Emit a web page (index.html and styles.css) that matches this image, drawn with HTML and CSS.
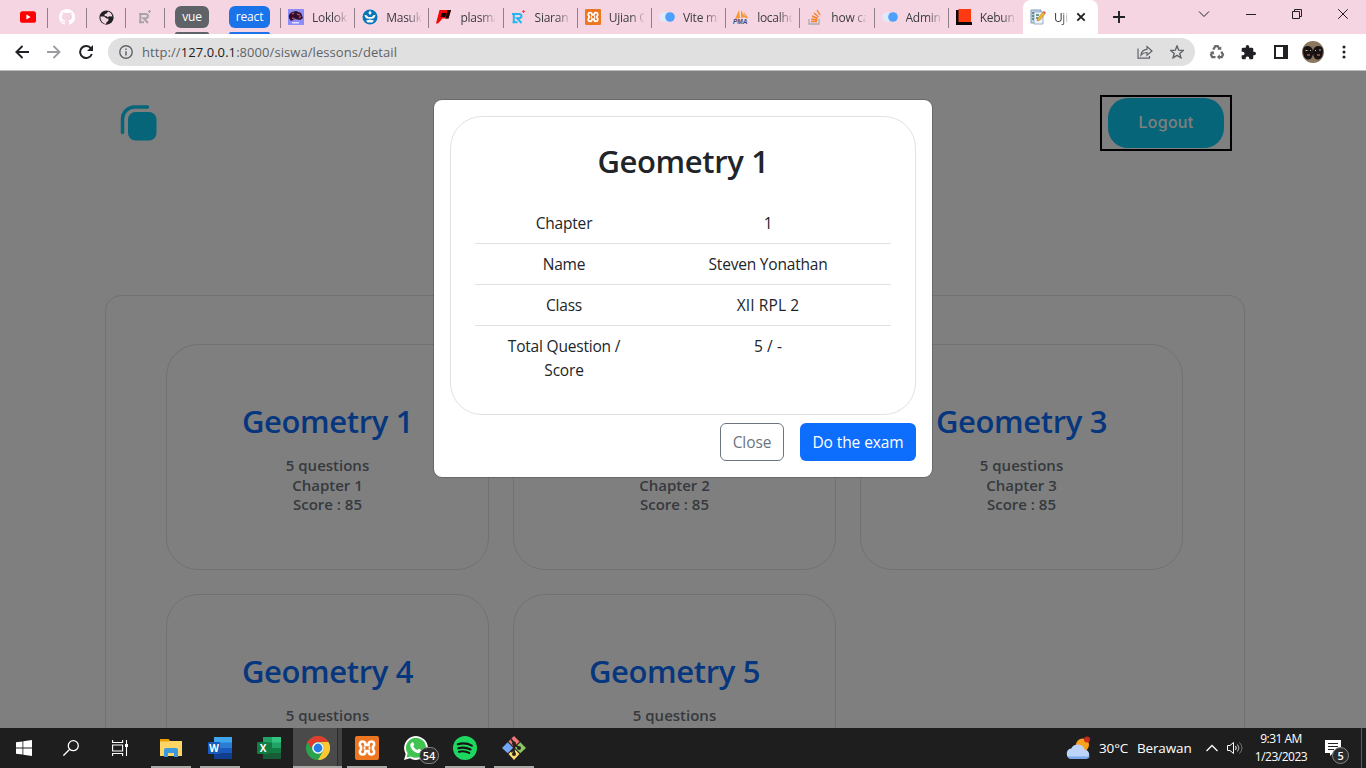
FILE: index.html
```html
<!DOCTYPE html>
<html lang="en">
<head>
<meta charset="utf-8">
<title>Ujian Online</title>
<link rel="stylesheet" href="styles.css">
</head>
<body>
<div class="screen">
  <header class="tabstrip">
    <div class="pin"><svg width="16" height="16" viewBox="0 0 16 16"><rect y="2.2" width="16" height="11.6" rx="2.6" fill="#f00"/><path d="M6.4 5.6v4.8L10.6 8z" fill="#fff"/></svg></div>
    <div class="pin"><svg width="16" height="16" viewBox="0 0 16 16"><path fill="#fff" d="M8 0C3.58 0 0 3.58 0 8c0 3.54 2.29 6.53 5.47 7.59.4.07.55-.17.55-.38v-1.49c-2.23.48-2.7-.95-2.7-.95-.36-.92-.89-1.17-.89-1.17-.72-.49.06-.48.06-.48.8.06 1.23.82 1.23.82.71 1.22 1.87.87 2.33.66.07-.52.28-.87.5-1.07-1.77-.2-3.64-.89-3.64-3.95 0-.87.31-1.59.82-2.15-.08-.2-.36-1.02.08-2.12 0 0 .67-.21 2.2.82a7.6 7.6 0 0 1 4 0c1.53-1.04 2.2-.82 2.2-.82.44 1.1.16 1.92.08 2.12.51.56.82 1.27.82 2.15 0 3.07-1.87 3.75-3.65 3.95.29.25.54.73.54 1.48v2.2c0 .21.15.46.55.38A8 8 0 0 0 16 8c0-4.42-3.58-8-8-8z"/></svg></div>
    <div class="pin"><svg width="15" height="15" viewBox="0 0 16 16"><circle cx="8" cy="8" r="7.6" fill="#202124"/><path d="M1.500 7h4l2.500 2h2v2.500L8 13l-.5 2C4 14.500 1.500 11.500 1.500 7zM9.500 1.600l-1 1.900-2.500 1v2l2 .2 1.500 1 1.500-1 3.300.300C14 4.500 12.500 2.500 9.500 1.600z" fill="#f6d5e3"/></svg></div>
    <div class="pin"><svg width="16" height="16" viewBox="0 0 16 16" fill="none" stroke="#a8a3a8" stroke-width="2"><path d="M2 5h6.500Q11 5 11 7T8.500 9.200H6.500L11 14M3.300 5v8.500M2 13.300h5"/><path stroke-width="1.200" d="M12.500 1v3M11 2.500h3"/></svg></div>
    <div class="group"><span class="chip chip-grey">vue</span></div>
    <div class="group group-blue"><span class="chip chip-blue">react</span></div>
    <div class="tab"><svg width="16" height="16" viewBox="0 0 16 16"><path fill="#8d8df5" d="M0 0h16v16H0z"/><path d="M1 9Q0 5 4 3l4-1 5 2 2 5-3 2-5-1-4 2z" fill="#300f2c"/><path d="M4 5l2-1M9 5l3 1M4 9l3 1M11 9l2-2" stroke="#a54b72" stroke-width="1.500"/><path fill="#dedcff" d="M4 13h7v1.500H4z"/></svg><span>Loklok</span></div>
    <div class="tab"><svg width="16" height="16" viewBox="0 0 16 16"><circle cx="8" cy="8" r="7.500" fill="#0875b8"/><path d="M8 1.500l1.700 2.500L8 6 6.300 4zM2.500 6c2 0 3 .5 3.500 2h4c.5-1.500 1.500-2 3.500-2-.5 2.500-1.500 3.500-3.500 3.700H6C4 9.500 3 8.500 2.500 6zM4 11.500l4-1 4 1-1.500 2H5.500z" fill="#f6f8f3"/></svg><span>Masuk</span></div>
    <div class="tab"><svg width="16" height="16" viewBox="0 0 16 16"><path d="M3.500 1H15l-2.500 8.500H6.500l-4.500 5H0z" fill="#f20808"/><path d="M6 4h4.500L9 8H4.500z" fill="#190000"/><path d="M11.500 1H15l-2.500 8.500H9.500z" fill="#190000"/></svg><span>plasma</span></div>
    <div class="tab"><svg width="16" height="16" viewBox="0 0 16 16" fill="none" stroke="#25b5ef" stroke-width="2"><path d="M1 5h7Q10.500 5 10.500 7T8 9.200H6L10.500 14M2.800 5v8.500M1.500 13.300h5"/><path stroke="#ed4b5b" stroke-width="1.200" d="M12.500 1v3M11 2.500h3"/></svg><span>Siaran</span></div>
    <div class="tab"><svg width="16" height="16" viewBox="0 0 24 24"><use href="#xampp"/></svg><span>Ujian Online</span></div>
    <div class="tab"><svg width="16" height="16" viewBox="0 0 16 16"><use href="#toggle"/></svg><span>Vite min</span></div>
    <div class="tab"><svg width="16" height="16" viewBox="0 0 16 16"><path d="M6 1l-4 9 5-1zM8 1v8l4-1zM11 3l1 6 3 0z" fill="#f69a32"/><text x="0" y="15" class="pma">PMA</text></svg><span>localhost</span></div>
    <div class="tab"><svg width="16" height="16" viewBox="0 0 16 16" fill="none"><path d="M2 10v5h10v-5" stroke="#aaa" stroke-width="1.300"/><path d="M4 12.500h6M4.200 10l6 1M5 7l5.500 2.500M7 4l4.500 4M10 1l3 5" stroke="#f48024" stroke-width="1.400"/></svg><span>how can</span></div>
    <div class="tab"><svg width="16" height="16" viewBox="0 0 16 16"><g id="toggle"><circle cx="5" cy="8" r="4.800" fill="#dfeafa"/><circle cx="11" cy="8" r="4.800" fill="#4da0fb"/></g></svg><span>Admin</span></div>
    <div class="tab last-tab"><svg width="16" height="16" viewBox="0 0 16 16"><path d="M0 1h3v12h13v3H0z" fill="#080808"/><path d="M2.500 0H15v13H2.500z" fill="#ff3a11"/></svg><span>Kebun</span></div>
    <div class="tab tab-active"><svg width="16" height="16" viewBox="0 0 16 16"><path d="M1 1h10v13H1z" fill="#c6d7ec" stroke="#819bbd"/><path d="M4 3h9v12H4z" fill="#edf4fb" stroke="#9aaeca"/><path d="M2 4h2M2 7h2M2 10h2M6 6h3M6 9h2" stroke="#427a68" stroke-width="1.600"/><path d="M7 12l1-3 5-6 2 2-5 6z" fill="#f4b52b" stroke="#937129" stroke-width=".5"/><path d="M13 3l1-1 2 2-1 1z" fill="#e25445"/></svg><span>Ujian</span><svg class="close" width="10" height="10" viewBox="0 0 10 10"><path d="M1.300 1.300l7.400 7.400m0-7.400L1.300 8.700" stroke="#202124" stroke-width="1.900"/></svg></div>
    <svg class="newtab" width="12" height="12" viewBox="0 0 12 12"><path d="M6 0v12M0 6h12" stroke="#202124" stroke-width="1.900"/></svg>
    <div class="winctl">
      <svg width="12" height="12" viewBox="0 0 12 12"><path d="M1 3.500l5 5 5-5"/></svg>
      <svg width="10" height="12" viewBox="0 0 10 12"><path d="M0 6.500h10"/></svg>
      <svg width="10" height="12" viewBox="0 0 10 12"><path d="M.5 3.500h7v7h-7zM2.500 3V1.500h7v7H8"/></svg>
      <svg width="10" height="12" viewBox="0 0 10 12"><path d="M.2 1.200l9.600 9.600m0-9.600L.2 10.800"/></svg>
    </div>
  </header>

  <nav class="toolbar">
    <svg width="14" height="14" viewBox="0 0 14 14"><path d="M14 7H2M7.500 1L1.400 7l6.100 6" fill="none" stroke="#202124" stroke-width="1.900"/></svg>
    <svg width="14" height="14" viewBox="0 0 14 14"><path d="M0 7h12M6.500 1l6.100 6-6.100 6" fill="none" stroke="#9c9da0" stroke-width="1.800"/></svg>
    <svg width="14" height="14" viewBox="0 0 14 14"><path d="M12 3.500A6 6 0 1 0 12.800 9" fill="none" stroke="#202124" stroke-width="2"/><path d="M14 0v6H8z" fill="#202124"/></svg>
    <div class="omnibox">
      <svg width="14" height="14" viewBox="0 0 14 14"><circle cx="7" cy="7" r="6.200" fill="none" stroke="#5f6368" stroke-width="1.400"/><path d="M7 6.200v4.300M7 3.400V5" stroke="#5f6368" stroke-width="1.500"/></svg>
      <span class="url">http://<b>127.0.0.1</b>:8000/siswa/lessons/detail</span>
      <svg class="share" width="16" height="14" viewBox="0 0 16 14" fill="none" stroke="#5f6368" stroke-width="1.200"><path d="M1 3.500v9.700h11.500V11M4 10c.5-3.500 2.500-5.500 6-5.700V1.500L15 6l-5 4.300V7.500c-2.500 0-4.500.7-6 2.500z"/></svg>
      <svg width="14" height="14" viewBox="0 0 14 14"><path d="M7 1l1.700 4.200 4.600.3-3.500 2.900 1.100 4.400L7 10.400l-3.900 2.400 1.100-4.400L.7 5.500l4.600-.3z" fill="none" stroke="#5f6368" stroke-width="1.400"/></svg>
    </div>
    <div class="actions">
      <svg width="16" height="16" viewBox="0 0 16 16" fill="none" stroke="#66686b" stroke-width="2.200"><path d="M4.300 5.600L6.300 2.200h2.400l1.700 2.600"/><path d="M12.300 7.600l1.700 3-1.200 2.500h-2.600M6.500 13.100H3.200L2 10.800l1.400-2.500"/><path d="M8.300 5.700h4V2.300zM10.800 10.200v5.600L7.900 13zM.8 8.300l3.600-1.300 1 3.700z" fill="#66686b" stroke="none"/></svg>
      <svg width="15" height="15" viewBox="1 1 22 22"><path fill="#202124" d="M20.500 11H19V7a2 2 0 0 0-2-2h-4V3.500a2.500 2.500 0 0 0-5 0V5H4a2 2 0 0 0-2 2v3.800h1.500a2.700 2.700 0 0 1 0 5.400H2V20a2 2 0 0 0 2 2h3.800v-1.500a2.700 2.700 0 0 1 5.400 0V22H17a2 2 0 0 0 2-2v-4h1.500a2.500 2.500 0 0 0 0-5z"/></svg>
      <svg class="panel-icon" width="14" height="14" viewBox="0 0 14 14"><path d="M1 1h12v12H1z" fill="#fff" stroke="#202124" stroke-width="2"/><path d="M9 1h4v12H9z" fill="#202124"/></svg>
      <svg class="avatar" width="22" height="22" viewBox="0 0 22 22"><circle cx="11" cy="11" r="11" fill="#8d7660"/><path d="M1 10q0-5 4.500-5T11 10q1-5 5.500-5T21 10q0 7-4.500 8.500Q12 19 11 13q-1 6-5.500 5.500Q1 17 1 10z" fill="#171314"/><path d="M3.500 9.500h2M8 10l1-1M14 9.500h-1M17 9h2" stroke="#c9b3a7"/><path d="M5 14h3M15 14h3" stroke="#bb5148" stroke-width="1.600"/></svg>
      <svg width="4" height="14" viewBox="0 0 4 14" fill="#202124"><circle cx="2" cy="2" r="1.500"/><circle cx="2" cy="7" r="1.500"/><circle cx="2" cy="12" r="1.500"/></svg>
    </div>
  </nav>

  <main class="page">
    <div class="topbar">
      <svg width="38" height="38" viewBox="0 0 38 38"><path d="M2.500 28.500V15A12 12 0 0 1 14.500 3h13" fill="none" stroke="#0ccaf0" stroke-width="3.500" stroke-linecap="round"/><rect x="8" y="8" width="28.500" height="28.500" rx="7.500" fill="#0ccaf0"/></svg>
      <div class="logout-focus"><button class="logout">Logout</button></div>
    </div>
    <section class="panel">
      <article class="card"><h2>Geometry 1</h2><p>5 questions<br>Chapter 1<br>Score : 85</p></article>
      <article class="card"><h2>Geometry 2</h2><p>5 questions<br>Chapter 2<br>Score : 85</p></article>
      <article class="card"><h2>Geometry 3</h2><p>5 questions<br>Chapter 3<br>Score : 85</p></article>
      <article class="card"><h2>Geometry 4</h2><p>5 questions<br>Chapter 4<br>Score : 85</p></article>
      <article class="card"><h2>Geometry 5</h2><p>5 questions<br>Chapter 5<br>Score : 85</p></article>
    </section>
    <div class="backdrop">
      <div class="modal">
        <div class="summary">
          <h2>Geometry 1</h2>
          <div class="row"><span>Chapter</span><span>1</span></div>
          <div class="row"><span>Name</span><span>Steven Yonathan</span></div>
          <div class="row"><span>Class</span><span class="class-name">XII RPL 2</span></div>
          <div class="row"><span>Total Question /<br>Score</span><span class="class-name">5 / -</span></div>
        </div>
        <div class="buttons"><button class="btn btn-close">Close</button><button class="btn btn-exam">Do the exam</button></div>
      </div>
    </div>
  </main>

  <footer class="taskbar">
    <div class="app"><svg width="16" height="16" viewBox="0 0 16 16" fill="#fff"><path d="M0 2.300l6.500-.9v6.200H0zM7.300 1.300L16 0v7.600H7.300zM0 8.400h6.500v6.200L0 13.700zM7.300 8.400H16V16l-8.700-1.300z"/></svg></div>
    <div class="app"><svg width="16" height="16" viewBox="0 0 16 16" fill="none" stroke="#fff" stroke-width="1.300"><circle cx="10.300" cy="5.700" r="5"/><path d="M6.700 9.300L.4 15.600"/></svg></div>
    <div class="app"><svg width="16" height="16" viewBox="0 0 16 16" fill="none" stroke="#fff" stroke-width="1.100"><path d="M.6 0v2.500h10V0M.6 5h10v6H.6zM.6 16v-2.500h10V16M14.500 0v16"/><path d="M13 4h3v3h-3z" fill="#fff" stroke="none"/></svg></div>
    <div class="app open"><svg width="22" height="20" viewBox="0 0 22 20"><path d="M0 1h8l2 2h12v15H0z" fill="#ffd666"/><path d="M0 1h9v2.500H0z" fill="#e7a000"/><path d="M4 19v-7q0-2 2-2h10q2 0 2 2v7h-4v-4H8v4z" fill="#3b99df"/></svg></div>
    <div class="app open"><svg width="24" height="22" viewBox="0 0 24 22"><path fill="#41a5ee" d="M6 0h18v6H6z"/><path fill="#2b7cd3" d="M6 5.500h18V11H6z"/><path fill="#185abd" d="M6 11h18v5.500H6z"/><path fill="#103f91" d="M6 16.500h18V22H6z"/><rect y="5" width="12" height="12" rx="1" fill="#185abd"/><text x="6" y="14.500" class="office">W</text></svg></div>
    <div class="app"><svg width="24" height="22" viewBox="0 0 24 22"><path fill="#21a366" d="M6 0h9v6H6z"/><path fill="#33c481" d="M15 0h9v6h-9z"/><path fill="#107c41" d="M6 5.500h9V16H6z"/><path fill="#21a366" d="M15 5.500h9V11h-9z"/><path fill="#107c41" d="M15 11h9v5.500h-9z"/><path fill="#185c37" d="M6 16h18v6H6z"/><rect y="5" width="12" height="12" rx="1" fill="#107c41"/><text x="6" y="14.500" class="office">X</text></svg></div>
    <div class="app open focused"><svg width="24" height="24" viewBox="0 0 24 24"><circle cx="12" cy="12" r="12" fill="#2ba24c"/><path d="M1.600 6A12 12 0 0 1 22.400 6H12a6 6 0 0 0-5.200 9z" fill="#e33b2e"/><path d="M22.400 6A12 12 0 0 1 12 24l5.200-9A6 6 0 0 0 12 6z" fill="#fcc934"/><circle cx="12" cy="12" r="5.800" fill="#fff"/><circle cx="12" cy="12" r="4.400" fill="#277de8"/></svg></div>
    <div class="app open"><svg width="24" height="24" viewBox="0 0 24 24"><g id="xampp"><rect width="24" height="24" rx="2" fill="#ed7621"/><path d="M7.500 5.500C4.500 5.500 4 9 6 10.500v3C4 15 4.500 18.500 7.500 18.500c2.500 0 3-1.500 3-3.500h3c0 2 .5 3.500 3 3.500 3 0 3.500-3.500 1.500-5v-3c2-1.500 1.500-5-1.500-5-2.500 0-3 1.500-3 3.500h-3c0-2-.5-3.500-3-3.500z" fill="none" stroke="#fff" stroke-width="2.600"/><path d="M9.500 10.500v3M14.500 10.500v3" stroke="#fff" stroke-width="1.800"/></g></svg></div>
    <div class="app badge-host"><svg width="24" height="24" viewBox="0 0 24 24"><path d="M0 24l1.700-6A11.900 11.900 0 1 1 6 22.300z" fill="#fff"/><path d="M2.500 21.500l1.100-4.200A10 10 0 1 1 7 20.500z" fill="#40c351"/><path d="M8 6.500c.8-.5 1.300-.3 1.700.7l.6 1.500-1 1.500c1 2 2.300 3 4.200 3.800l1.200-1.300 2.600 1.200c.2 2.500-2 3.500-3.800 3C9.500 16 6 12 6.300 9c.1-1 .8-2 1.700-2.500z" fill="#fff"/></svg><span class="badge wide">54</span></div>
    <div class="app open"><svg width="24" height="24" viewBox="0 0 24 24"><circle cx="12" cy="12" r="12" fill="#1ed760"/><path d="M4.800 8.300c5-1.400 10-.9 14 1.300M5.300 12.200c4.500-1.200 8.500-.7 12.200 1.200M6 15.700c3.800-.9 7-.5 10.200 1.200" fill="none" stroke="#191414" stroke-width="2.200" stroke-linecap="round"/></svg></div>
    <div class="app open"><svg width="24" height="24" viewBox="0 0 24 24"><path d="M12 0l5.500 5.500L12 11 6.500 5.500z" fill="#f37778"/><path d="M5.700 6.300l5.500 5.500-5.500 5.500L0 12z" fill="#72a8f3"/><path d="M18.300 6.300L24 12l-5.700 5.300-5.500-5.500z" fill="#8ac763"/><path d="M12 12.500l5.500 5.500L12 24l-5.500-6z" fill="#fadb72"/><path d="M9 3l3 4v11M12 8l5 4M12 13l-3 3" fill="none" stroke="#29211f" stroke-width="1.800"/><circle cx="12" cy="7.500" r="2" fill="#29211f"/><circle cx="17" cy="12" r="2" fill="#29211f"/><circle cx="12" cy="18" r="2" fill="#29211f"/></svg></div>
    <div class="tray">
      <svg class="weather" width="25" height="24" viewBox="0 0 25 24"><circle cx="16.500" cy="9" r="6.500" fill="#f7a11c"/><path d="M5.500 23a5.300 5.300 0 0 1-.3-10.500 7.300 7.300 0 0 1 13.500 1.200A4.800 4.800 0 0 1 20 23z" fill="#bcd3fa"/><path d="M1.500 20.500A5 5 0 0 0 5.500 23H20a4.700 4.700 0 0 0 4-2.500z" fill="#7da8ee"/><circle cx="21" cy="3.500" r="3" fill="#c92b20"/></svg>
      <span class="temp">30°C</span><span class="sky">Berawan</span>
      <svg class="chev" width="12" height="8" viewBox="0 0 12 8"><path d="M.5 7L6 1.500 11.500 7" fill="none" stroke="#fff" stroke-width="1.300"/></svg>
      <svg class="vol" width="17" height="14" viewBox="0 0 17 14" fill="none" stroke="#fff"><path d="M.5 4.500H3l3.500-3v11L3 9.500H.5zM8.500 5q1.500 2 0 4"/><path d="M10.500 3.500q3 3.500 0 7" stroke="#bbb"/><path d="M12.500 1.500q5 5.500 0 11" stroke="#777"/></svg>
      <div class="clock">9:31 AM<br>1/23/2023</div>
      <div class="badge-host note"><svg width="16" height="16" viewBox="0 0 16 16"><path d="M0 0h16v13H8l-3 3v-3H0z" fill="#fff"/><path d="M3 3.500h10M3 6.500h10M3 9.500h6" stroke="#222"/></svg><span class="badge">5</span></div>
    </div>
    <div class="peek"></div>
  </footer>
</div>
</body>
</html>
```
FILE: styles.css
```css
* { box-sizing: border-box; }
body { margin: 0; font-family: "Open Sans", "Noto Sans", sans-serif; }
h2, p { margin: 0; }
svg { display: block; flex: none; }
button { font: inherit; padding: 0; }

.screen { width: 1366px; height: 768px; display: flex; flex-direction: column; overflow: hidden; }

/* Tab strip */
.tabstrip { height: 34px; flex: none; display: flex; background: #f6d5e3; padding-left: 9px; font-size: 12px; color: #3c3c40; }
.pin { width: 39px; height: 34px; flex: none; display: flex; align-items: center; justify-content: center; }
.pin svg { margin-right: 1px; }
.pin, .tab { background: linear-gradient(#8f8087, #8f8087) right 0 top 8px / 1px 20px no-repeat; }
.group { width: 54px; flex: none; padding: 6px 10px 0 10px; height: 34px; display: flex; flex-direction: column; justify-content: space-between; }
.group::after { content: ""; height: 2px; background: #5f6368; border-radius: 2px 2px 0 0; }
.group-blue { width: 62px; padding: 6px 11px 0 10px; background: linear-gradient(#8f8087, #8f8087) right 0 top 8px / 1px 20px no-repeat; }
.group-blue::after { background: #1a73e8; }
.chip { height: 22px; border-radius: 6px; color: #fff; text-align: center; line-height: 21px; font-weight: 500; letter-spacing: -.15px; }
.chip-grey { background: #5f6368; }
.chip-blue { background: #1a73e8; }
.tab { width: 74.200px; height: 34px; flex: none; display: flex; align-items: center; padding-left: 7px; gap: 8px; }
.tab span { width: 35px; overflow: hidden; white-space: nowrap; letter-spacing: -.25px; -webkit-mask-image: linear-gradient(90deg, #000 62%, transparent 105%); mask-image: linear-gradient(90deg, #000 62%, transparent 105%); }
.last-tab { background: none; }
.tab-active { width: 75px; background: #fff; border-radius: 8px 8px 0 0; }
.tab-active span { width: 14px; }
.newtab { margin: 11px 0 0 15px; }
.winctl { flex: 1; display: flex; justify-content: flex-end; gap: 36px; padding: 8px 18px 0 0; fill: none; stroke: #222; }
.pma { font: italic bold 6.500px "Liberation Sans", sans-serif; fill: #45486e; }

/* Address bar */
.toolbar { height: 37px; flex: none; display: flex; align-items: center; background: #fff; border-bottom: 1px solid #bcbcbc; padding: 0 20px 0 15px; gap: 18px; }
.omnibox { flex: 1; height: 28px; border-radius: 14px; background: #e0e0e0; margin-left: -3px; display: flex; align-items: center; padding: 0 11px; }
.url { flex: 1; margin-left: 9px; font-size: 13px; letter-spacing: .07px; color: #5f6368; }
.url b { font-weight: 400; color: #202124; }
.share { margin-right: 17px; }
.actions { display: flex; align-items: center; gap: 16px; margin-left: -4px; }
.panel-icon { margin-left: 2px; }
.avatar { margin: 0 2px 0 -2px; }

/* Page */
.page { flex: 1; min-height: 0; overflow: hidden; display: grid; grid-template-rows: 224px 1fr; background: #fff; padding: 0 121px 0 105px; }
.topbar { grid-area: 1 / 1; display: flex; justify-content: space-between; align-items: flex-start; padding: 24px 13px 0 15px; }
.topbar > svg { margin-top: 9px; }
.logout-focus { width: 132px; height: 56px; border: 2px solid #000; padding: 1px 6px; }
.logout { width: 116px; height: 50px; border: 0; border-radius: 20px; background: #0ccaf0; color: #fff; font: 500 16px Inter, sans-serif; letter-spacing: .25px; padding-bottom: 2px; }
.panel { grid-area: 2 / 1; height: 620px; border: 1px solid #dee2e6; border-radius: 16px; padding: 48px 61px 0 60px; display: grid; grid-template-columns: repeat(3, 323px); grid-auto-rows: 226px; gap: 24px; }
.card { border: 1px solid #dee2e6; border-radius: 32px; text-align: center; padding-top: 57px; }
.card h2 { color: #0d6efd; }
.card h2, .summary h2 { font-weight: 550; font-size: 31px; line-height: 38.400px; letter-spacing: -.35px; }
.card p { margin-top: 16px; color: #6c757d; font-weight: 600; font-size: 15px; line-height: 19.500px; }
.backdrop { position: absolute; top: 71px; left: 0; width: 1366px; height: 657px; background: rgba(0,0,0,.5); display: flex; justify-content: center; align-items: flex-start; padding-top: 29px; }

/* Exam dialog */
.modal { width: 498px; height: 377px; background: #fff; border-radius: 8px; padding: 16px; box-shadow: 0 0 0 1px rgba(0,0,0,.17); color: #212529; font-size: 15.500px; line-height: 24px; letter-spacing: -.2px; }
.summary { height: 299px; border: 1px solid #dee2e6; border-radius: 32px; padding: 25px 24px 0; text-align: center; }
.summary h2 { margin-bottom: 23px; }
.row { display: grid; grid-template-columns: 178px 230px; padding: 8px 0; border-bottom: 1px solid #dee2e6; }
.row:last-child { border-bottom: 0; }
.class-name { letter-spacing: .1px; }
.buttons { display: flex; justify-content: flex-end; gap: 16px; margin-top: 8px; }
.btn { height: 38px; border-radius: 6px; letter-spacing: -.1px; }
.btn-close { width: 64px; border: 1px solid #6c757d; background: #fff; color: #6c757d; }
.btn-exam { width: 116px; border: 0; background: #0d6efd; color: #fff; }

/* Taskbar */
.taskbar { height: 40px; flex: none; display: flex; background: #1e1e1e; color: #fff; }
.app { width: 49px; height: 40px; flex: none; display: flex; align-items: center; justify-content: center; }
.app:first-child { width: 48px; }
.app:nth-child(2), .app:nth-child(3) { padding-right: 3px; }
.open { background: linear-gradient(#aaa8a4, #aaa8a4) center bottom / 40px 2px no-repeat; }
.focused { background: linear-gradient(#aaa8a4, #aaa8a4) center bottom / 100% 2px no-repeat, linear-gradient(90deg, #4a4a4a 44px, #2c2c2c 44px 45px, #424242 45px); }
.office { font: bold 10px "Open Sans", sans-serif; fill: #fff; text-anchor: middle; }
.badge-host { position: relative; }
.badge { position: absolute; right: -8px; bottom: -8px; width: 17px; height: 17px; border: 1px solid #888; border-radius: 9px; background: #2c2c2c; font-size: 11px; font-weight: 600; line-height: 15px; text-align: center; }
.badge.wide { width: 20px; right: 1px; bottom: 4px; }
.tray { flex: 1; display: flex; align-items: center; font-size: 13.500px; letter-spacing: -.15px; padding-right: 20px; justify-content: flex-end; }
.weather { margin-right: 8px; }
.temp { width: 38px; white-space: nowrap; }
.sky { width: 69px; }
.chev { margin-right: 9px; }
.vol { margin-right: 8px; }
.clock { width: 58px; text-align: center; font-size: 12px; line-height: 18px; letter-spacing: -.5px; margin-right: 15px; white-space: nowrap; }
.peek { width: 5px; border-left: 1px solid #5a5a5a; }
```
